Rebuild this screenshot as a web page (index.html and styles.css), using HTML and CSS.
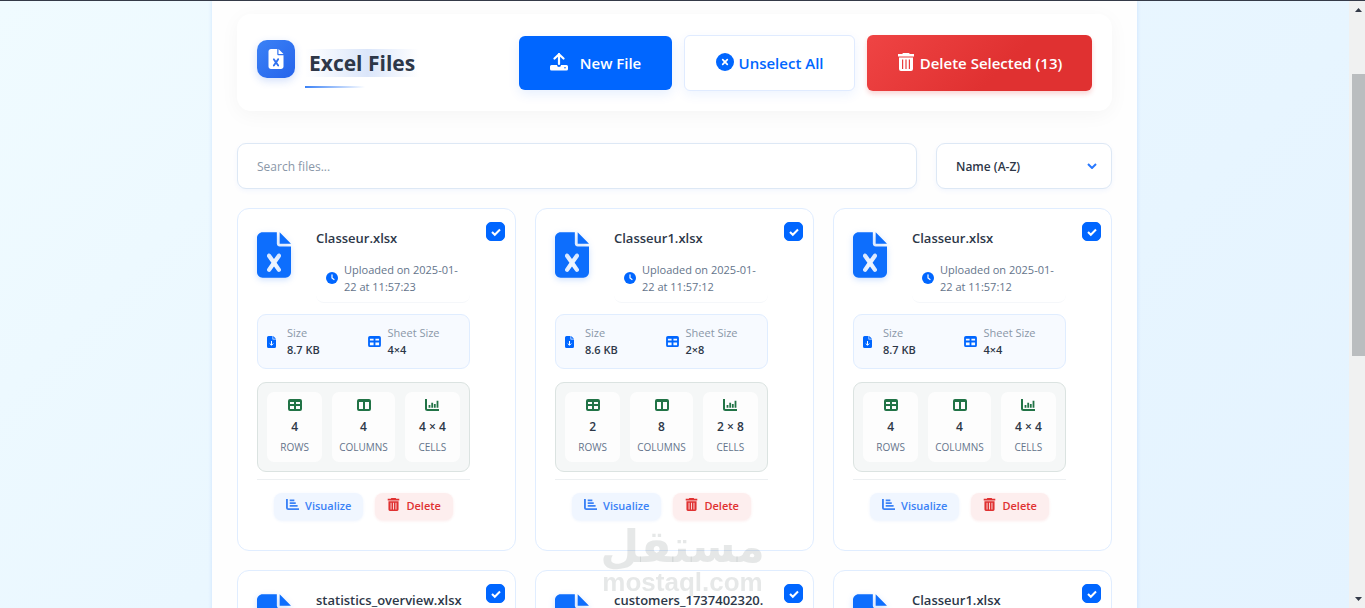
FILE: index.html
```html
<!DOCTYPE html>
<html lang="en">
<head>
  <meta charset="UTF-8" />
  <meta name="viewport" content="width=device-width, initial-scale=1.0"/>
  <title>Excel Files</title>
  <link rel="stylesheet" href="styles.css">
</head>
<body>
  <svg class="sprite" aria-hidden="true">
    <symbol id="i-excel" viewBox="0 0 384 512"><path d="M64 0C28.700 0 0 28.700 0 64V448c0 35.300 28.700 64 64 64H320c35.300 0 64-28.700 64-64V160H256c-17.700 0-32-14.300-32-32V0H64zM256 0V128H384L256 0zM155.700 250.200L192 302.100l36.300-51.900c7.600-10.900 22.600-13.500 33.400-5.900s13.500 22.600 5.900 33.400L221.300 344l46.400 66.200c7.600 10.900 5 25.800-5.900 33.400s-25.800 5-33.400-5.900L192 385.800l-36.300 51.900c-7.600 10.900-22.600 13.500-33.400 5.900s-13.500-22.600-5.900-33.400L162.700 344l-46.400-66.200c-7.600-10.900-5-25.800 5.900-33.400s25.800-5 33.400 5.900z"/></symbol>
    <symbol id="i-upload" viewBox="0 0 18 18"><path d="M9 1v10M4.500 5.500 9 1.300l4.500 4.200" fill="none" stroke="currentColor" stroke-width="2.200" stroke-linecap="round" stroke-linejoin="round"/><path d="M1.500 12H7a2 2 0 0 0 4 0h5.500A1.500 1.500 0 0 1 18 13.500v2.500A1.500 1.500 0 0 1 16.500 17.500h-15A1.500 1.500 0 0 1 0 16v-2.500A1.500 1.500 0 0 1 1.500 12zM15 14a.8.800 0 1 0 0 1.600.8.800 0 0 0 0-1.600z" fill-rule="evenodd"/></symbol>
    <symbol id="i-cross" viewBox="0 0 18 18"><circle cx="9" cy="9" r="9"/><path d="m6.700 6.700 4.600 4.600M11.300 6.700l-4.600 4.600" stroke="#fff" stroke-width="1.700" stroke-linecap="round"/></symbol>
    <symbol id="i-trash" viewBox="0 0 16 18"><path d="M5 0h6l.8 1H16v2.500H0V1h4.200zM1 4.500h14V16a2 2 0 0 1-2 2H3a2 2 0 0 1-2-2zM4 6.500V16h1.200V6.500zM7.400 6.500V16h1.200V6.500zM10.800 6.500V16H12V6.500z" fill-rule="evenodd"/></symbol>
    <symbol id="i-clock" viewBox="0 0 12 12"><circle cx="6" cy="6" r="6"/><path d="M6 2.800V6l2 1.500" fill="none" stroke="#fff" stroke-width="1.200" stroke-linecap="round"/></symbol>
    <symbol id="i-filedown" viewBox="0 0 9 12"><path d="M1.500 0H5.500V3.500H9V10.500A1.500 1.500 0 0 1 7.500 12h-6A1.500 1.500 0 0 1 0 10.500v-9A1.500 1.500 0 0 1 1.500 0zM6.200 0 9 2.800H6.200z"/><path d="M4.500 5v4M2.700 7.500l1.800 1.800 1.800-1.800" fill="none" stroke="#fff" stroke-width="1"/></symbol>
    <symbol id="i-table" viewBox="0 0 14 12"><path d="M2 0h10a2 2 0 0 1 2 2v8a2 2 0 0 1-2 2H2a2 2 0 0 1-2-2V2a2 2 0 0 1 2-2zM2 3v2h4V3zM8 3v2h4V3zM2 7v3h4V7zM8 7v3h4V7z" fill-rule="evenodd"/></symbol>
    <symbol id="i-columns" viewBox="0 0 14 12"><path d="M2 0h10a2 2 0 0 1 2 2v8a2 2 0 0 1-2 2H2a2 2 0 0 1-2-2V2a2 2 0 0 1 2-2zM2 3v7h4V3zM8 3v7h4V3z" fill-rule="evenodd"/></symbol>
    <symbol id="i-chart" viewBox="0 0 14 12"><path d="M1 0v9.500a1.500 1.500 0 0 0 1.500 1.500H14" fill="none" stroke="currentColor" stroke-width="2"/><path d="M4.500 8.800V6M7.200 8.800v-5M9.800 8.800V5M12.500 8.800v-7" stroke="currentColor" stroke-width="1.800"/></symbol>
    <symbol id="i-bars" viewBox="0 0 14 12"><path d="M1 0v9.500a1.500 1.500 0 0 0 1.500 1.500H14" fill="none" stroke="currentColor" stroke-width="2"/><path d="M4 1.500h5M4 4.500h6.500M4 7.500h8.500" stroke="currentColor" stroke-width="2"/></symbol>
  </svg>

  <main class="page">
    <div class="container">
      <header class="header">
        <div class="brand">
          <span class="brand-icon"><svg class="brand-file"><use href="#i-excel"/></svg></span>
          <h1 class="title"><span>Excel Files</span></h1>
        </div>
        <div class="actions">
          <button type="button" class="btn btn-new"><svg><use href="#i-upload"/></svg>New File</button>
          <button type="button" class="btn btn-unselect"><svg><use href="#i-cross"/></svg>Unselect All</button>
          <button type="button" class="btn btn-delete"><svg><use href="#i-trash"/></svg>Delete Selected (13)</button>
        </div>
      </header>

      <div class="filters">
        <input class="search" type="text" placeholder="Search files..." aria-label="Search files">
        <div class="sort">
          <select aria-label="Sort files">
            <option>Name (A-Z)</option>
            <option>Name (Z-A)</option>
          </select>
          <svg viewBox="0 0 10 6"><path d="m1 1 4 4 4-4"/></svg>
        </div>
      </div>

      <section class="grid" id="fileGrid"></section>
    </div>
  </main>

  <div class="scrollbar" aria-hidden="true">
    <svg viewBox="0 0 7 4"><path d="M0 4h7L3.500 0z"/></svg>
    <div class="track"><div class="thumb"></div></div>
    <svg viewBox="0 0 7 4"><path d="M0 0h7L3.500 4z"/></svg>
  </div>

  <div class="watermark">
    <span class="watermark-ar" lang="ar">مستقل</span>
    <span class="watermark-en">mostaql.com</span>
  </div>

  <script>
    const files = [
      { name: 'Classeur.xlsx', time: '11:57:23', size: '8.7 KB', rows: 4, cols: 4 },
      { name: 'Classeur1.xlsx', time: '11:57:12', size: '8.6 KB', rows: 2, cols: 8 },
      { name: 'Classeur.xlsx', time: '11:57:12', size: '8.7 KB', rows: 4, cols: 4 },
      { name: 'statistics_overview.xlsx', time: '11:57:12', size: '8.7 KB', rows: 4, cols: 4 },
      { name: 'customers_1737402320.<wbr>xlsx', time: '11:57:12', size: '8.7 KB', rows: 4, cols: 4 },
      { name: 'Classeur1.xlsx', time: '11:57:12', size: '8.6 KB', rows: 2, cols: 8 }
    ];

    const icon = id => `<svg class="${id}"><use href="#${id}"/></svg>`;

    document.getElementById('fileGrid').innerHTML = files.map(file => `
      <article class="card">
        <div class="card-body">
          <div class="card-head">
            <svg class="file-icon"><use href="#i-excel"/></svg>
            <div class="card-info">
              <h2>${file.name}</h2>
              <p class="uploaded">${icon('i-clock')}<span>Uploaded on 2025-01-22 at ${file.time}</span></p>
            </div>
          </div>
          <div class="details">
            <div class="detail">${icon('i-filedown')}<p>Size<b>${file.size}</b></p></div>
            <div class="detail">${icon('i-table')}<p>Sheet Size<b>${file.rows}×${file.cols}</b></p></div>
          </div>
          <div class="stats">
            <div class="stat">${icon('i-table')}<b>${file.rows}</b><span>ROWS</span></div>
            <div class="stat">${icon('i-columns')}<b>${file.cols}</b><span>COLUMNS</span></div>
            <div class="stat">${icon('i-chart')}<b>${file.rows} × ${file.cols}</b><span>CELLS</span></div>
          </div>
          <div class="card-actions">
            <button type="button" class="small-btn visualize">${icon('i-bars')}Visualize</button>
            <button type="button" class="small-btn delete">${icon('i-trash')}Delete</button>
          </div>
        </div>
        <label class="check">
          <input type="checkbox" checked aria-label="Select file">
          <svg viewBox="0 0 12 12"><path d="m2 6 2.800 2.800L10 3.500"/></svg>
        </label>
      </article>`).join('');
  </script>
</body>
</html>
```

FILE: styles.css
```css
* {
  box-sizing: border-box;
}

body {
  margin: 0;
  height: 100vh;
  display: flex;
  overflow: hidden;
  border-top: 1px solid #343a48;
  background: linear-gradient(135deg, #f0fbff 0%, #eaf7ff 40%, #e4f3ff 100%);
  color: #2d3748;
  font-family: "Open Sans", "Noto Sans", sans-serif;
  font-size: 12px;
}

svg {
  fill: currentColor;
  flex: none;
}

h1, h2, p {
  margin: 0;
}

button, input, select {
  font-family: inherit;
}

.sprite {
  display: none;
}

.page {
  flex: 1;
  min-width: 0;
  overflow: hidden;
}

.container {
  max-width: 925px;
  min-height: 100%;
  margin: 0 auto;
  padding: 13px 25px;
  background: #fefefe;
  box-shadow: 0 0 4px rgba(0, 102, 255, 0.14);
}

/* header */
.header {
  display: flex;
  justify-content: space-between;
  align-items: center;
  padding: 21px 20px 20px;
  background: #fff;
  border-radius: 14px;
  box-shadow: 0 4px 20px rgba(0, 0, 0, 0.04);
}

.brand {
  display: flex;
  align-items: center;
  gap: 10px;
}

.brand-icon {
  display: flex;
  align-items: center;
  justify-content: center;
  width: 38px;
  height: 38px;
  margin-bottom: 8px;
  border-radius: 10px;
  color: #fff;
  background: linear-gradient(135deg, #3b82f6, #2563eb);
  box-shadow: 0 3px 8px rgba(37, 99, 235, 0.2);
}

.brand-file {
  width: 16px;
  height: 20px;
}

.title {
  padding: 10px 0 11px;
  font-size: 21px;
  line-height: 28px;
  font-weight: 700;
  background: linear-gradient(90deg, #3b82f6, transparent) left bottom / 60px 2px no-repeat;
}

.title span {
  display: block;
  padding: 0 4px;
  background: linear-gradient(90deg, transparent, #dbe6fa 55%, transparent);
}

.actions {
  display: flex;
  align-items: center;
  gap: 12px;
}

.btn {
  display: flex;
  align-items: center;
  justify-content: center;
  gap: 5px;
  height: 56px;
  padding: 0;
  border: 1px solid transparent;
  border-radius: 6px;
  font-size: 15px;
  font-weight: 600;
  white-space: nowrap;
  cursor: pointer;
}

.btn svg {
  width: 18px;
  height: 18px;
  margin-bottom: 3px;
}

.btn-new {
  width: 153px;
  height: 54px;
  gap: 12px;
  color: #fff;
  background: #0066ff;
  box-shadow: 0 4px 12px rgba(0, 102, 255, 0.1);
}

.btn-unselect {
  width: 171px;
  color: #0066ff;
  background: #fff;
  border-color: #e0ebff;
  box-shadow: 0 4px 12px rgba(0, 102, 255, 0.07);
}

.btn-delete {
  width: 225px;
  color: #fff;
  background: linear-gradient(135deg, #ef4444, #e03131 60%) border-box;
  box-shadow: 0 3px 5px rgba(224, 49, 49, 0.2);
}

/* search and sort */
.filters {
  display: flex;
  gap: 19px;
  margin: 32px 0 19px;
}

.search, .sort select {
  height: 46px;
  padding: 0 19px;
  border: 1px solid #dde8f5;
  border-radius: 9px;
  background: #fff;
  font-size: 12px;
  box-shadow: 0 2px 5px rgba(0, 102, 255, 0.05);
}

.search {
  flex: 1;
}

.search::placeholder {
  color: #8a97a8;
}

.sort {
  display: grid;
  align-items: center;
  width: 176px;
}

.sort select, .sort svg {
  grid-area: 1 / 1;
}

.sort select {
  appearance: none;
  width: 100%;
  color: #2d3748;
  font-weight: 600;
}

.sort svg {
  justify-self: end;
  width: 10px;
  height: 6px;
  margin-right: 15px;
  fill: none;
  stroke: #2878ff;
  stroke-width: 2;
  pointer-events: none;
}

/* file cards */
.grid {
  display: grid;
  grid-template-columns: repeat(3, minmax(0, 1fr));
  gap: 19px;
}

.card {
  display: flex;
  gap: 16px;
  padding: 13px 10px 30px 19px;
  border: 1px solid #e0edff;
  border-radius: 12px;
  background: #fff;
}

.card-body {
  flex: 1;
  min-width: 0;
  padding-top: 6px;
}

.card-head {
  display: flex;
  gap: 25px;
  margin-bottom: 11px;
}

.file-icon {
  width: 34px;
  height: 46px;
  margin-top: 4px;
  color: #0d6efd;
  filter: drop-shadow(0 2px 3px rgba(0, 102, 255, 0.2));
}

.card-info {
  flex: 1;
  min-width: 0;
}

.card-info h2 {
  font-size: 13px;
  line-height: 20px;
  font-weight: 600;
}

.uploaded {
  display: flex;
  align-items: center;
  gap: 6px;
  margin-top: 6px;
  padding: 7px 0 7px 10px;
  border-bottom: 1px solid #f5f7fa;
  border-radius: 8px;
  color: #64748b;
  font-size: 11px;
  line-height: 17px;
}

.i-clock {
  width: 12px;
  height: 12px;
  color: #0066ff;
}

.details {
  display: grid;
  grid-template-columns: 1fr 1fr;
  margin-bottom: 13px;
  padding: 10px 9px;
  border: 1px solid #e0edff;
  border-radius: 9px;
  background: #f7faff;
}

.detail {
  display: flex;
  align-items: center;
  gap: 11px;
  color: #0066ff;
}

.detail + .detail {
  padding-left: 4px;
  gap: 7px;
}

.detail .i-filedown {
  width: 9px;
  height: 12px;
}

.detail .i-table {
  width: 13px;
  height: 11px;
}

.detail p {
  color: #8a97a8;
  font-size: 11px;
  line-height: 16px;
  white-space: nowrap;
}

.detail b {
  display: block;
  color: #2d3748;
  font-weight: 600;
  line-height: 17px;
}

.stats {
  display: flex;
  gap: 10px;
  padding: 9px;
  border: 1px solid #dbe3e1;
  border-radius: 9px;
  background: #f5f7f7;
}

.stat {
  display: flex;
  flex: 1;
  flex-direction: column;
  align-items: center;
  padding: 7px 7px 6px;
  border-radius: 7px;
  background: #fdfdfd;
}

.stat svg {
  width: 14px;
  height: 12px;
  color: #217346;
}

.stat b {
  margin-top: 7px;
  font-size: 12px;
  font-weight: 600;
  line-height: 18px;
  white-space: nowrap;
}

.stat span {
  margin-top: 3px;
  color: #64748b;
  font-size: 10px;
  line-height: 17px;
}

.card-actions {
  display: flex;
  justify-content: center;
  gap: 12px;
  margin-top: 7px;
  padding-top: 13px;
  border-top: 1px solid #edf0f2;
}

.small-btn {
  display: flex;
  align-items: center;
  gap: 6px;
  height: 27px;
  padding: 0 12px 2px;
  border: none;
  border-radius: 8px;
  font-size: 11px;
  font-weight: 600;
  cursor: pointer;
}

.small-btn svg {
  width: 13px;
  height: 13px;
  margin-bottom: 2px;
}

.visualize {
  color: #3b82f6;
  background: #f0f6ff;
  box-shadow: 0 1px 3px rgba(59, 130, 246, 0.1);
}

.delete {
  color: #e03131;
  background: #fdeeee;
  box-shadow: 0 1px 3px rgba(224, 49, 49, 0.1);
}

.check {
  display: grid;
  place-items: center;
  width: 19px;
  height: 19px;
}

.check input, .check svg {
  grid-area: 1 / 1;
}

.check input {
  appearance: none;
  width: 19px;
  height: 19px;
  margin: 0;
  border: 1px solid #0066ff;
  border-radius: 5px;
}

.check input:checked {
  background: #0066ff;
}

.check svg {
  width: 12px;
  height: 12px;
  fill: none;
  stroke: #fff;
  stroke-width: 2;
  pointer-events: none;
}

/* scrollbar */
.scrollbar {
  display: flex;
  flex-direction: column;
  align-items: center;
  width: 16px;
  padding: 7px 0 7px 2px;
  background: #f0f1f1;
  color: #343a48;
}

.scrollbar svg {
  width: 7px;
  height: 4px;
}

.track {
  flex: 1;
  width: 13px;
  padding-top: 62px;
}

.thumb {
  height: 54%;
  background: #babdbf;
}

/* watermark */
.watermark {
  position: fixed;
  left: 50%;
  bottom: 13px;
  transform: translateX(-50%);
  display: flex;
  flex-direction: column;
  align-items: center;
  color: rgba(60, 80, 75, 0.13);
  font-weight: 700;
  pointer-events: none;
}

.watermark-ar {
  font-family: "DejaVu Sans", sans-serif;
  font-size: 45px;
  line-height: 44px;
}

.watermark-en {
  font-family: "Liberation Sans", sans-serif;
  font-size: 26px;
  line-height: 26px;
}
```
